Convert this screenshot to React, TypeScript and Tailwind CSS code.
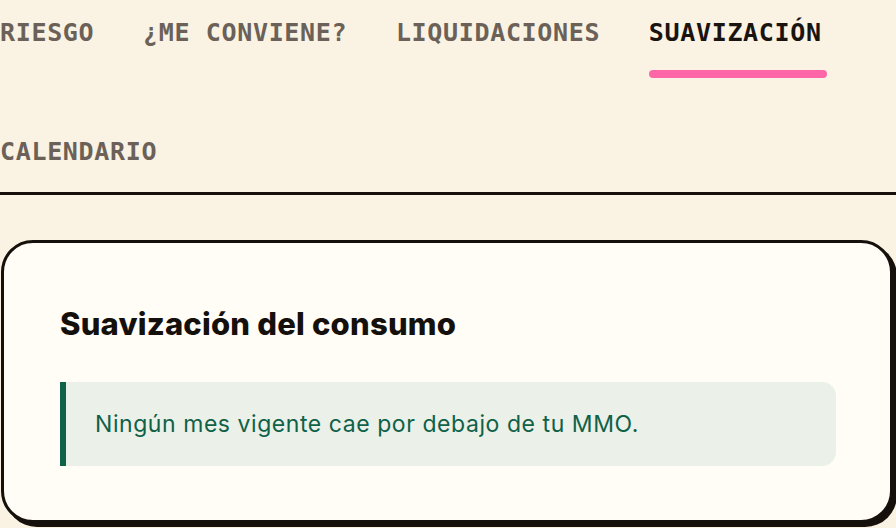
const tabs = ['RIESGO', '¿ME CONVIENE?', 'LIQUIDACIONES', 'SUAVIZACIÓN', 'CALENDARIO']
const active = 'SUAVIZACIÓN'

function Tab({ label, isActive }: { label: string; isActive: boolean }) {
  return (
    <button
      className={
        isActive
          ? 'relative flex h-[73px] flex-col justify-start text-left text-[25px] leading-[24px] font-bold tracking-[0.66px] text-[#1a1410]'
          : 'relative flex h-[73px] flex-col justify-start text-left text-[25px] leading-[24px] font-bold tracking-[0.66px] text-[#6b6158]'
      }
      style={{ fontFamily: '"DejaVu Sans Mono", monospace' }}
    >
      <span className="block pt-[21px]">{label}</span>
      {isActive && (
        <span className="absolute left-0 -right-[5px] top-[70px] h-[8px] rounded-full bg-[#ff66a8]" />
      )}
    </button>
  )
}

export default function App() {
  return (
    <div className="min-h-[528px] overflow-hidden bg-[#faf3e3]">
      {/* tab strip */}
      <nav className="flex flex-wrap items-start gap-x-[48.7px] gap-y-[46px] border-b-[3px] border-[#15100c]">
        {tabs.map((t) => (
          <Tab key={t} label={t} isActive={t === active} />
        ))}
      </nav>

      {/* card */}
      <section
        className="ml-px mt-[45px] w-[892px] rounded-[32px] border-[3px] border-[#15100c] bg-[#fffdf5] px-[56px] pt-[63px] pb-[54px] shadow-[4px_4px_0_#15100c]"
        style={{ fontFamily: 'Inter, "Liberation Sans", sans-serif' }}
      >
        <h2 className="text-[31px] leading-[36px] font-extrabold tracking-[0.2px] text-[#15100c]">
          Suavización del consumo
        </h2>
        <div className="mt-[40px] flex h-[84px] w-[776px] items-center rounded-r-[14px] border-l-[6px] border-[#0f6148] bg-[#ebf0e8] pl-[29px]">
          <p className="text-[23px] leading-[28px] tracking-[0.56px] text-[#0f6148]">
            Ningún mes vigente cae por debajo de tu MMO.
          </p>
        </div>
      </section>
    </div>
  )
}
